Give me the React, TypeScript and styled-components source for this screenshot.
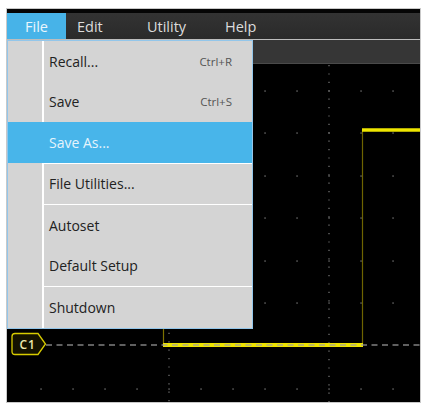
import React from "react";
import styled, { createGlobalStyle } from "styled-components";

const Global = createGlobalStyle`
  html, body { margin: 0; padding: 0; background: #ffffff; }
  body { font-family: "Open Sans", "Noto Sans", sans-serif; }
`;

const Screen = styled.div`
  position: relative;
  margin: 8px 0 0 6px;
  width: 413px;
  height: 393px;
  border: 1px solid #c9c9c9;
  background: #000;
  display: flex;
  flex-direction: column;
`;

const TopBand = styled.div`
  height: 4px;
  background: #050505;
`;

const MenuBar = styled.div`
  height: 26px;
  display: flex;
  align-items: stretch;
  background: linear-gradient(#333333, #2a2a2a);
  border-bottom: 1px solid #bdbdbd;
`;

const Tab = styled.div<{ $active?: boolean; $w?: number }>`
  display: flex;
  align-items: center;
  box-sizing: border-box;
  width: ${(p) => (p.$w ? `${p.$w}px` : "auto")};
  padding: ${(p) => (p.$active ? "0 18px" : "0 0 0 11px")};
  font-size: 14.5px;
  color: ${(p) => (p.$active ? "#eaf6fd" : "#dcdcdc")};
  background: ${(p) => (p.$active ? "#47b3e8" : "transparent")};
`;

const SubBar = styled.div`
  height: 23px;
  background: #363636;
  border-bottom: 1px solid #4a4a4a;
`;

const Scope = styled.div`
  height: 338px;
  background: #000;
`;

const Dropdown = styled.div`
  position: absolute;
  left: 0;
  top: 31px;
  width: 244px;
  border: 1px solid #93c6ea;
  background: #d4d4d4;
  display: flex;
  flex-direction: column;
`;

const Item = styled.div<{ $active?: boolean }>`
  height: 40.5px;
  display: flex;
  align-items: center;
  background: ${(p) => (p.$active ? "#48b5ea" : "transparent")};
`;

const Gutter = styled.div`
  width: 34px;
  align-self: stretch;
`;

const Rule = styled.div<{ $active?: boolean }>`
  width: 2px;
  align-self: stretch;
  background: ${(p) => (p.$active ? "transparent" : "#ffffff")};
`;

const Label = styled.div<{ $active?: boolean }>`
  flex: 1;
  padding-left: 5px;
  font-size: 14px;
  color: ${(p) => (p.$active ? "#e6f4fc" : "#222222")};
`;

const Shortcut = styled.div`
  padding-right: 20px;
  font-size: 11.5px;
  color: #555555;
`;

const Separator = styled.div`
  height: 1px;
  margin-left: 34px;
  background: #ffffff;
`;

const COLS = Array.from({ length: 12 }, (_, k) => 34 + 32 * k);
const ROWS = [27, 69, 112, 154, 197, 239, 325];

function Graticule() {
  return (
    <svg width={413} height={338} viewBox="0 0 413 338" style={{ display: "block" }}>
      {ROWS.map((y) =>
        COLS.map((x) => <rect key={`${x}-${y}`} x={x - 0.6} y={y - 0.6} width={1.3} height={1.3} fill="#7a7a7a" />)
      )}
      <line x1={162} y1={0} x2={162} y2={338} stroke="#7a7a7a" strokeWidth={1.2} strokeDasharray="1.2 7.2" />
      <line x1={322} y1={1} x2={322} y2={338} stroke="#7a7a7a" strokeWidth={1.2} strokeDasharray="1.2 7.2" />
      {/* signal */}
      <line x1={0} y1={66} x2={156} y2={66} stroke="#eee600" strokeWidth={3.5} />
      <line x1={156.5} y1={66} x2={156.5} y2={281} stroke="#7d7200" strokeWidth={1.2} />
      <line x1={355.5} y1={281} x2={355.5} y2={66} stroke="#6e6400" strokeWidth={1.2} />
      <line x1={156} y1={281} x2={356} y2={281} stroke="#ece300" strokeWidth={4} />
      <line x1={355} y1={66} x2={413} y2={66} stroke="#eee600" strokeWidth={3.5} />
      {/* reference baseline */}
      <line x1={39} y1={281} x2={413} y2={281} stroke="#a0a0a0" strokeWidth={1.3} strokeDasharray="6 4.5" opacity={0.8} />
      {/* channel marker */}
      <path
        d="M8 269.5 H31 L38.5 280 L31 290.5 H8 Q5 290.5 5 287.5 V272.5 Q5 269.5 8 269.5 Z"
        fill="#141200"
        stroke="#d8cc00"
        strokeWidth={1.3}
      />
      <text x={12.5} y={284.5} fontSize={12} fontFamily="Open Sans, sans-serif" fontWeight={600} fill="#efe9b0" letterSpacing={1}>
        C1
      </text>
    </svg>
  );
}

export default function App() {
  return (
    <>
      <Global />
      <Screen>
        <TopBand />
        <MenuBar>
          <Tab $active>File</Tab>
          <Tab $w={70}>Edit</Tab>
          <Tab $w={78}>Utility</Tab>
          <Tab>Help</Tab>
        </MenuBar>
        <SubBar />
        <Scope>
          <Graticule />
        </Scope>
        <Dropdown>
          <Item>
            <Gutter />
            <Rule />
            <Label>Recall...</Label>
            <Shortcut>Ctrl+R</Shortcut>
          </Item>
          <Item>
            <Gutter />
            <Rule />
            <Label>Save</Label>
            <Shortcut>Ctrl+S</Shortcut>
          </Item>
          <Item $active>
            <Gutter />
            <Rule $active />
            <Label $active>Save As...</Label>
          </Item>
          <Separator />
          <Item>
            <Gutter />
            <Rule />
            <Label>File Utilities...</Label>
          </Item>
          <Separator />
          <Item>
            <Gutter />
            <Rule />
            <Label>Autoset</Label>
          </Item>
          <Item>
            <Gutter />
            <Rule />
            <Label>Default Setup</Label>
          </Item>
          <Separator />
          <Item>
            <Gutter />
            <Rule />
            <Label>Shutdown</Label>
          </Item>
        </Dropdown>
      </Screen>
    </>
  );
}
